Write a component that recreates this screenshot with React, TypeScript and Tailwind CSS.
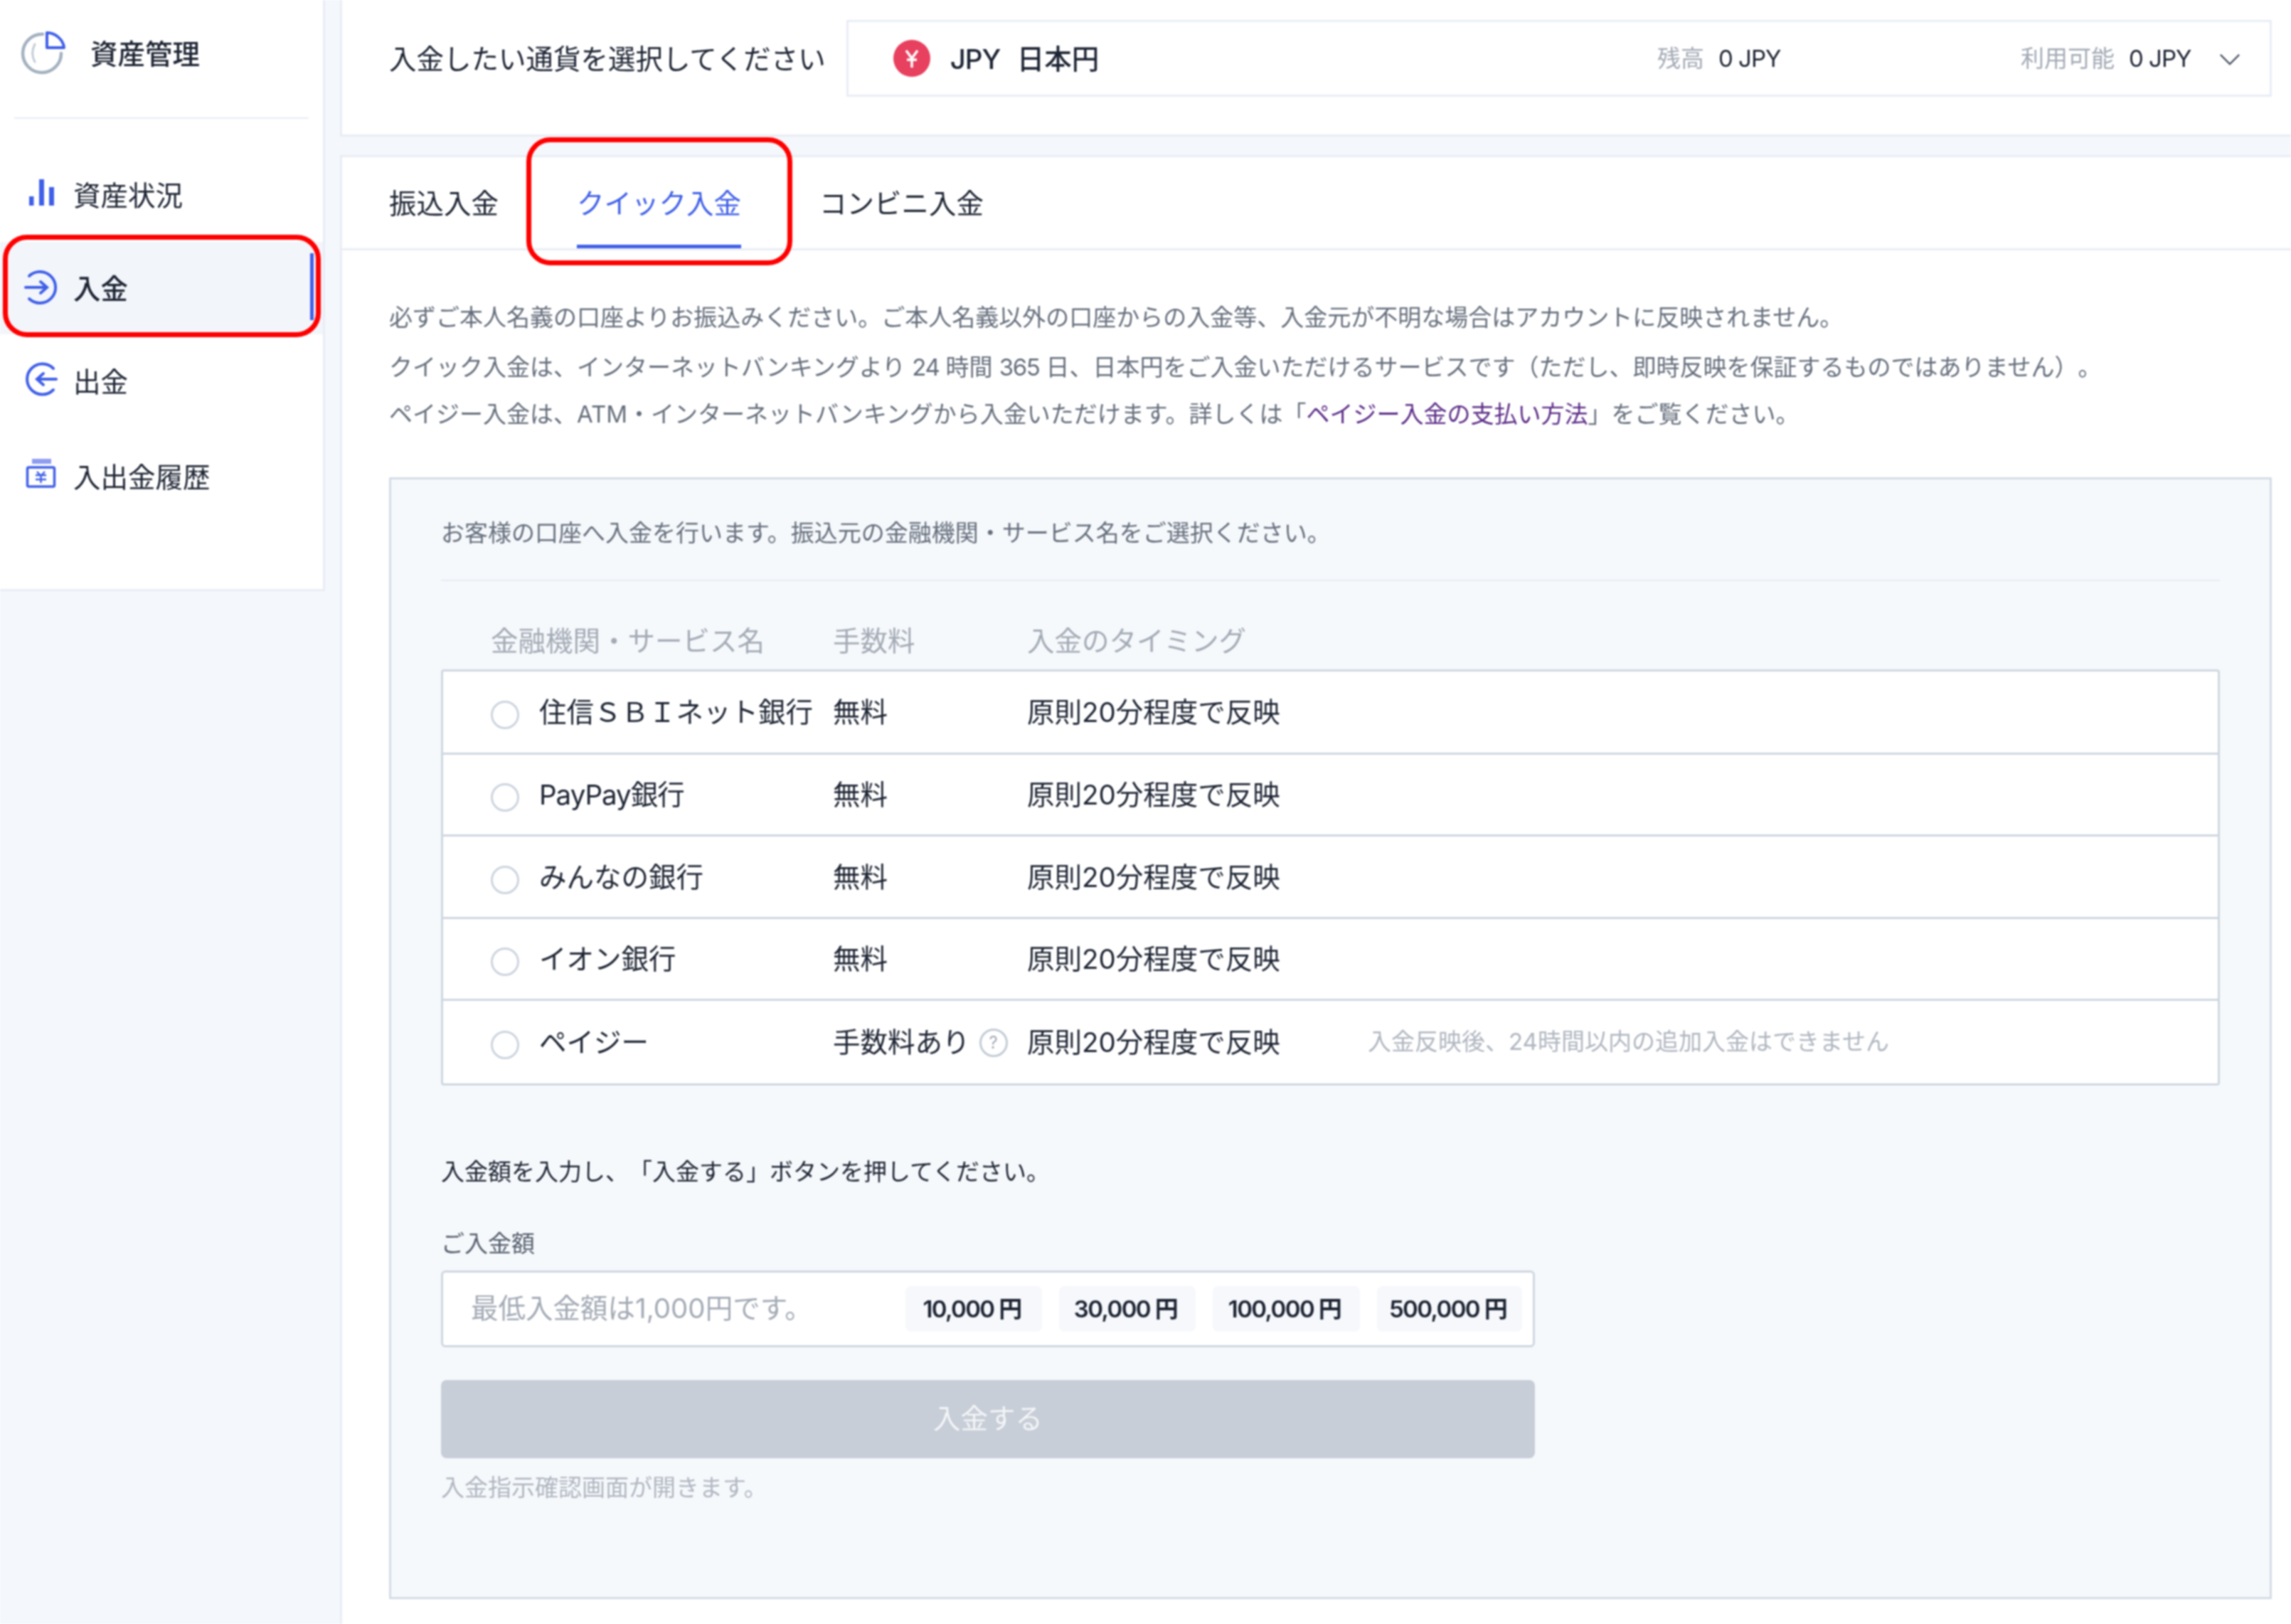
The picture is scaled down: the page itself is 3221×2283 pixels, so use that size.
import React from "react";

const B = "#3f5fe8";

function PieIcon() {
  return (
    <svg width="70" height="70" viewBox="25 42 70 70" fill="none" className="shrink-0">
      <path d="M58 52A27 27 0 1 0 84 79" stroke="#a3b1c0" strokeWidth="4.5" strokeLinecap="round" />
      <path d="M47 66C42 76 43 84 47 91" stroke="#c3ccd6" strokeWidth="3" strokeLinecap="round" />
      <path d="M64 50C76 50 87 60 88 71H64Z" stroke={B} strokeWidth="4" strokeLinejoin="round" />
    </svg>
  );
}
function BarsIcon() {
  return (
    <svg width="70" height="70" viewBox="20 238 70 70" className="shrink-0" fill={B}>
      <rect x="41" y="275" width="6.5" height="13" />
      <rect x="55" y="251" width="7" height="37" />
      <rect x="69" y="262" width="7" height="26" />
    </svg>
  );
}
function InIcon() {
  return (
    <svg width="70" height="70" viewBox="20 366 70 70" fill="none" stroke={B} strokeWidth="4" className="shrink-0" strokeLinecap="round">
      <path d="M41 384A22 22 0 1 1 41 416" />
      <path d="M36 400H65" />
      <path d="M57 392L66 400L57 408" />
    </svg>
  );
}
function OutIcon() {
  return (
    <svg width="70" height="70" viewBox="20 498 70 70" fill="none" stroke={B} strokeWidth="4" className="shrink-0" strokeLinecap="round">
      <path d="M75 515A21.5 21.5 0 1 0 75 545" />
      <path d="M79 530H53" />
      <path d="M61 522L52 530L61 538" />
    </svg>
  );
}
function HistoryIcon() {
  return (
    <svg width="70" height="70" viewBox="20 633 70 70" fill="none" className="shrink-0">
      <rect x="45" y="643" width="27" height="7" fill="#8f9df0" />
      <rect x="38.5" y="655" width="38" height="27" rx="2" stroke={B} strokeWidth="3.5" />
      <path d="M52 661L57.5 667L63 661M50 666H65M50 672H65M57.5 667V677" stroke={B} strokeWidth="2.5" />
    </svg>
  );
}
function YenBadge() {
  return (
    <svg width="52" height="52" viewBox="0 0 52 52" className="shrink-0">
      <circle cx="26" cy="26" r="26" fill="#e8405f" />
      <path d="M18 15L26 26L34 15M26 26V39M19 28H33" stroke="#fff" strokeWidth="3.5" fill="none" />
    </svg>
  );
}

const nav = [
  { label: "資産状況", icon: <BarsIcon />, h: "h-[133px]" },
  { label: "入金", icon: <InIcon />, h: "h-[130px]", active: true },
  { label: "出金", icon: <OutIcon />, h: "h-[132px]" },
  { label: "入出金履歴", icon: <HistoryIcon />, h: "h-[136px]" },
];

const banks = [
  { name: "住信ＳＢＩネット銀行", fee: "無料", h: "h-[117px]" },
  { name: "PayPay銀行", fee: "無料", h: "h-[115px]", tight: true },
  { name: "みんなの銀行", fee: "無料", h: "h-[116px]" },
  { name: "イオン銀行", fee: "無料", h: "h-[115px]" },
  { name: "ペイジー", fee: "手数料あり", h: "h-[116px]", help: true, note: "入金反映後、24時間以内の追加入金はできません" },
];

const chips = [
  { label: "10,000 円", w: "w-[192px]" },
  { label: "30,000 円", w: "w-[192px]" },
  { label: "100,000 円", w: "w-[207px]" },
  { label: "500,000 円", w: "w-[204px]" },
];

export default function App() {
  return (
    <div className="flex w-full h-[2283px] overflow-hidden bg-[#f4f7fb] text-[#1d2433] text-[33px] [text-spacing-trim:space-all] blur-[0.8px] font-['Inter','Noto_Sans_CJK_JP',sans-serif]">
      {/* sidebar */}
      <aside className="w-[457px] h-[831px] shrink-0 bg-white border-r-[3px] border-b-[3px] border-[#e9edf5] text-[38.5px]">
        <div className="mx-[20px] h-[167px] border-b-[2px] border-[#e6ebf3] flex items-center pb-[19px] pl-[7px] gap-[30px]">
          <PieIcon />
          <span className="font-medium pt-[8px]">資産管理</span>
        </div>
        <nav className="pt-[40px]">
          {nav.map((n) => (
            <div key={n.label} className={`relative flex items-center pl-[20px] gap-[13px] ${n.h} ${n.active ? "bg-[#f2f5fa] font-medium" : ""}`}>
              {n.icon}
              <span className="pt-[4px]">{n.label}</span>
              {n.active && (
                <>
                  <span className="absolute left-[436px] top-[16px] bottom-[20px] w-[5px] bg-[#3f5fe8]" />
                  <span className="absolute left-[4px] right-[3px] -top-[10px] -bottom-[4px] border-[7px] border-[#ff0000] rounded-[34px]" />
                </>
              )}
            </div>
          ))}
        </nav>
      </aside>

      {/* main */}
      <main className="ml-[21px] flex-1 flex flex-col min-w-0 text-[38.5px]">
        <section className="h-[192px] shrink-0 bg-white border-l-[3px] border-b-[3px] border-[#e9edf5] pl-[66px] pr-[27px] pt-[28px]">
          <div className="flex items-center gap-[29px]">
            <span className="whitespace-nowrap pt-[3px]">入金したい通貨を選択してください</span>
            <div className="flex-1 h-[108px] border-[3px] border-[#e9edf5] flex items-center pl-[63px] pr-[41px]">
              <YenBadge />
              <span className="ml-[28px] w-[94px] font-medium tracking-[-1px] pt-[3px]">JPY</span>
              <span className="font-medium pt-[3px]">日本円</span>
              <div className="ml-auto flex items-center text-[33px] pt-[2px]">
                <span className="text-[#a3aab5]">残高</span>
                <span className="ml-[20px] w-[425px] tracking-[-1px]">0 JPY</span>
                <span className="text-[#a3aab5]">利用可能</span>
                <span className="ml-[20px] w-[127px] tracking-[-1px]">0 JPY</span>
                <svg width="30" height="17" viewBox="0 0 32 18" fill="none" stroke="#4a5464" strokeWidth="2.5">
                  <path d="M2 2L16 16L30 2" />
                </svg>
              </div>
            </div>
          </div>
        </section>

        <section className="mt-[26px] flex-1 bg-white border-l-[3px] border-t-[3px] border-[#e9edf5]">
          <div className="h-[131px] border-b-[3px] border-[#e9edf5] pl-[66px] flex gap-[110px]">
            <div className="flex items-center whitespace-nowrap pt-[3px]">振込入金</div>
            <div className="relative flex items-center whitespace-nowrap text-[#3f5fe8] pt-[3px]">
              クイック入金
              <span className="absolute left-0 right-0 bottom-[0px] h-[5px] bg-[#3f5fe8]" />
              <span className="absolute -left-[71px] -right-[72px] -top-[28px] -bottom-[24px] border-[7px] border-[#ff0000] rounded-[34px]" />
            </div>
            <div className="flex items-center whitespace-nowrap pt-[3px]">コンビニ入金</div>
          </div>

          <div className="pl-[66px] pr-[27px] pt-[61px]">
            <div className="text-[33px] leading-[66px] text-[#656e7c] whitespace-nowrap">
              <p className="mb-[4px]">必ずご本人名義の口座よりお振込みください。ご本人名義以外の口座からの入金等、入金元が不明な場合はアカウントに反映されません。</p>
              <p>
                クイック入金は、インターネットバンキングより <span className="tracking-[-1.5px]">24</span> 時間 <span className="tracking-[-1.5px]">365</span> 日、日本円をご入金いただけるサービスです（ただし、即時反映を保証するものではありません）。
              </p>
              <p>
                ペイジー入金は、ATM・インターネットバンキングから入金いただけます。詳しくは「<span className="text-[#5a2a86]">ペイジー入金の支払い方法</span>」をご覧ください。
              </p>
            </div>

            <div className="mt-[56px] h-[1577px] bg-[#f6f9fc] border-[3px] border-[#d5dce6] pl-[70px] pr-[70px] pt-[42px]">
              <p className="text-[33px] leading-[66px] text-[#656e7c] whitespace-nowrap">お客様の口座へ入金を行います。振込元の金融機関・サービス名をご選択ください。</p>
              <div className="h-[35px] border-b-[2px] border-[#e6ebf3]" />
              <div className="mt-[52px] h-[66px] flex items-center text-[#a3aab5] whitespace-nowrap pl-[70px]">
                <span className="w-[481px]">金融機関・サービス名</span>
                <span className="w-[273px]">手数料</span>
                <span>入金のタイミング</span>
              </div>
              <div className="mt-[6px] bg-white border-[3px] border-[#cfd7e1] rounded-[4px] divide-y-[3px] divide-[#cfd7e1]">
                {banks.map((b) => (
                  <div key={b.name} className={`flex items-center pl-[67px] whitespace-nowrap ${b.h}`}>
                    <span className="w-[40px] h-[40px] mt-[8px] rounded-full border-[3px] border-[#cdd5df] bg-white shrink-0" />
                    <span className={`ml-[28px] w-[413px] pt-[2px] ${b.tight ? "tracking-[-1px]" : ""}`}>{b.name}</span>
                    <span className="w-[273px] flex items-center pt-[2px]">
                      {b.fee}
                      {b.help && (
                        <span className="ml-[13px] w-[40px] h-[40px] rounded-full border-[3px] border-[#c3ccd6] text-[#a3aab5] text-[24px] flex items-center justify-center">?</span>
                      )}
                    </span>
                    <span className="w-[479px] pt-[2px]">原則20分程度で反映</span>
                    {b.note && <span className="text-[33px] text-[#b0b6c0]">{b.note}</span>}
                  </div>
                ))}
              </div>

              <p className="mt-[96px] h-[50px] leading-[50px] text-[33px] whitespace-nowrap">入金額を入力し、「入金する」ボタンを押してください。</p>
              <p className="mt-[51px] h-[50px] leading-[50px] text-[33px] text-[#565f6d]">ご入金額</p>
              <div className="mt-[13px] w-[1538px] h-[108px] bg-white border-[3px] border-[#cfd7e1] rounded-[6px] flex items-center pl-[39px] pr-[15px]">
                <span className="text-[#a3aab5] whitespace-nowrap">最低入金額は1,000円です。</span>
                <div className="ml-auto flex gap-[24px]">
                  {chips.map((c) => (
                    <span key={c.label} className={`${c.w} h-[64px] pr-[5px] pt-[2px] bg-[#f6f8fb] rounded-[8px] flex items-center justify-center text-[33px] font-semibold tracking-[-1.6px] whitespace-nowrap`}>
                      {c.label}
                    </span>
                  ))}
                </div>
              </div>
              <div className="mt-[46px] w-[1538px] h-[110px] bg-[#c7ced8] rounded-[8px] flex items-center justify-center text-white/80">入金する</div>
              <p className="mt-[16px] h-[50px] leading-[50px] text-[33px] text-[#b0b6c0] whitespace-nowrap">入金指示確認画面が開きます。</p>
            </div>
          </div>
        </section>
      </main>
    </div>
  );
}
